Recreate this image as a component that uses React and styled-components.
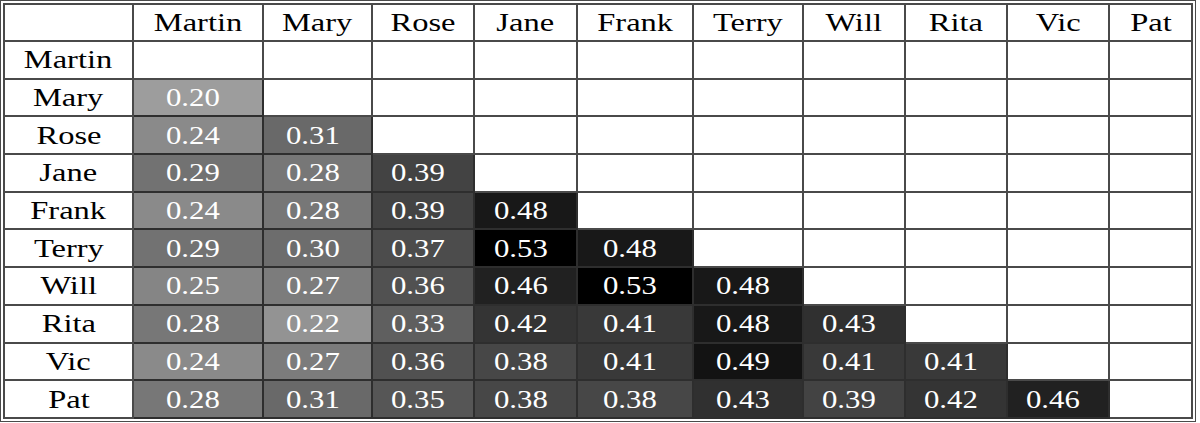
import React from "react";
import styled, { createGlobalStyle } from "styled-components";

const GlobalStyle = createGlobalStyle`
  body {
    margin: 0;
    background: #ffffff;
    font-family: "Liberation Serif", "Times New Roman", serif;
  }
`;

const Frame = styled.div`
  display: inline-block;
  border: 1px solid #4a4a4a;
  padding: 2px;
  background: #ffffff;
`;

const Table = styled.table`
  border-collapse: separate;
  border-spacing: 0;
  table-layout: fixed;
  border-top: 2px solid #4a4a4a;
  border-left: 2px solid #4a4a4a;
`;

const Cell = styled.td`
  box-sizing: border-box;
  width: ${(p) => p.$w || "auto"};
  height: ${(p) => p.$h || "37.7px"};
  padding: 0 ${(p) => (p.$shade ? "10px" : "0")} 0 0;
  border-right: 2px solid ${(p) => (p.$shade ? "#2e2e2e" : "#4a4a4a")};
  border-bottom: 2px solid ${(p) => (p.$shade ? "#2e2e2e" : "#4a4a4a")};
  background: ${(p) => p.$shade || "#ffffff"};
  text-align: center;
  vertical-align: middle;
  font-size: 25px;
  line-height: 1;
  color: ${(p) => (p.$shade ? "#ffffff" : "#000000")};
  white-space: nowrap;
  overflow: hidden;
`;

const Label = styled.span`
  display: inline-block;
  transform: scaleX(1.3);
`;

const Num = styled.span`
  display: inline-block;
  transform: scaleX(1.23);
`;

const names = ["Martin", "Mary", "Rose", "Jane", "Frank", "Terry", "Will", "Rita", "Vic", "Pat"];
const widths = [129, 130, 109, 102, 103, 116, 110, 102, 102, 102, 83];

const data = [
  [],
  [0.2],
  [0.24, 0.31],
  [0.29, 0.28, 0.39],
  [0.24, 0.28, 0.39, 0.48],
  [0.29, 0.3, 0.37, 0.53, 0.48],
  [0.25, 0.27, 0.36, 0.46, 0.53, 0.48],
  [0.28, 0.22, 0.33, 0.42, 0.41, 0.48, 0.43],
  [0.24, 0.27, 0.36, 0.38, 0.41, 0.49, 0.41, 0.41],
  [0.28, 0.31, 0.35, 0.38, 0.38, 0.43, 0.39, 0.42, 0.46],
];

// lighter for weak links, black for the strongest
const shade = (v) => {
  const g = Math.max(0, Math.min(255, Math.round((157 * (0.53 - v)) / 0.33)));
  return `rgb(${g}, ${g}, ${g})`;
};

const App = () => (
  <>
    <GlobalStyle />
    <Frame>
      <Table>
        <tbody>
          <tr>
            <Cell $w={`${widths[0]}px`} $h="37px" />
            {names.map((n, i) => (
              <Cell key={n} $w={`${widths[i + 1]}px`} $h="37px">
                <Label>{n}</Label>
              </Cell>
            ))}
          </tr>
          {names.map((row, r) => (
            <tr key={row}>
              <Cell>
                <Label>{row}</Label>
              </Cell>
              {names.map((col, c) => {
                const v = data[r][c];
                return v === undefined ? (
                  <Cell key={col} />
                ) : (
                  <Cell key={col} $shade={shade(v)}>
                    <Num>{v.toFixed(2)}</Num>
                  </Cell>
                );
              })}
            </tr>
          ))}
        </tbody>
      </Table>
    </Frame>
  </>
);

export default App;
